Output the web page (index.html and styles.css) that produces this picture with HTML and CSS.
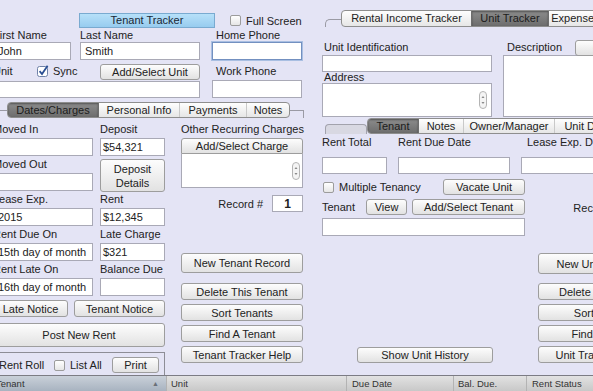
FILE: index.html
```html
<!DOCTYPE html>
<html lang="en">
<head>
    <meta charset="UTF-8">
    <title>Tenant Tracker</title>
    <link rel="stylesheet" href="styles.css">
</head>
<body>
<div class="screen">
    <div class="main">
        <!-- tenant side -->
        <section class="tenant-panel">
            <div class="title-row">
                <div class="title-bar">Tenant Tracker</div>
                <label class="check"><span class="box"></span>Full Screen</label>
            </div>

            <div class="name-grid">
                <div class="lbl">First Name</div>
                <div class="lbl">Last Name</div>
                <div class="lbl phone-lbl">Home Phone</div>
                <div class="field first-field">John</div>
                <div class="field last-field">Smith</div>
                <div class="field phone-field focus"></div>
                <div class="unit-line">
                    <span class="unit-lbl">Unit</span>
                    <label class="check">
                        <svg class="tick" width="12" height="12" viewBox="0 0 12 12"><rect x="0.5" y="1.5" width="10" height="10" rx="2" fill="#fff" stroke="#6f82a8"/><path d="M2.6 6.2 L5 9 L10.6 0.8" fill="none" stroke="#2b4f93" stroke-width="1.8"/></svg>Sync
                    </label>
                </div>
                <div class="unit-btn-cell"><button class="btn unit-btn">Add/Select Unit</button></div>
                <div class="lbl phone-lbl low">Work Phone</div>
                <div class="field unit-field"></div>
                <div class="field phone-field work"></div>
            </div>

            <div class="tab-row">
                <span class="tab-line lead"></span>
                <div class="tabs">
                    <span class="tab on t-dates">Dates/Charges</span>
                    <span class="tab t-personal">Personal Info</span>
                    <span class="tab t-payments">Payments</span>
                    <span class="tab t-notes">Notes</span>
                </div>
                <span class="tab-line tail"></span>
            </div>

            <div class="lower">
                <div class="dates">
                    <div class="field-grid">
                        <div class="cell"><div class="lbl row-lbl">Moved In</div><div class="field"></div></div>
                        <div class="cell"><div class="lbl row-lbl">Deposit</div><div class="field tight">$54,321</div></div>
                        <div class="cell"><div class="lbl row-lbl">Moved Out</div><div class="field"></div></div>
                        <div class="cell"><button class="btn deposit-btn">Deposit<br>Details</button></div>
                        <div class="cell"><div class="lbl row-lbl">Lease Exp.</div><div class="field">2015</div></div>
                        <div class="cell"><div class="lbl row-lbl">Rent</div><div class="field tight">$12,345</div></div>
                        <div class="cell"><div class="lbl row-lbl">Rent Due On</div><div class="field">15th day of month</div></div>
                        <div class="cell"><div class="lbl row-lbl">Late Charge</div><div class="field tight">$321</div></div>
                        <div class="cell"><div class="lbl row-lbl">Rent Late On</div><div class="field">16th day of month</div></div>
                        <div class="cell"><div class="lbl row-lbl">Balance Due</div><div class="field"></div></div>
                    </div>
                    <div class="notice-row">
                        <button class="btn late-btn">Late Notice</button>
                        <button class="btn notice-btn">Tenant Notice</button>
                    </div>
                    <button class="btn post-btn">Post New Rent</button>
                    <div class="roll-box">
                        <span class="roll-lbl">Rent Roll</span>
                        <label class="check list-all"><span class="box"></span>List All</label>
                        <button class="btn print-btn">Print</button>
                    </div>
                </div>

                <div class="actions">
                    <div class="lbl row-lbl">Other Recurring Charges</div>
                    <button class="btn charge-btn">Add/Select Charge</button>
                    <div class="text-box charges">
                        <svg width="8" height="18" viewBox="0 0 8 18"><rect x="0.5" y="0.5" width="7" height="17" rx="3.5" fill="#f4f4f4" stroke="#b4b4b4"/><path d="M2.5 7 L4 5 L5.5 7 Z M2.5 11 L4 13 L5.5 11 Z" fill="#888"/></svg>
                    </div>
                    <div class="record-row">
                        <span>Record #</span>
                        <div class="field rec-field">1</div>
                    </div>
                    <button class="btn big-btn">New Tenant Record</button>
                    <button class="btn side-btn first-side">Delete This Tenant</button>
                    <button class="btn side-btn">Sort Tenants</button>
                    <button class="btn side-btn">Find A Tenant</button>
                    <button class="btn side-btn">Tenant Tracker Help</button>
                </div>
            </div>
        </section>

        <!-- unit side -->
        <section class="unit-panel">
            <div class="top-tabs">
                <span class="corner-line"></span>
                <div class="tabs">
                    <span class="tab t-income">Rental Income Tracker</span>
                    <span class="tab on t-unit">Unit Tracker</span>
                    <span class="tab t-expense">Expense Tracker</span>
                </div>
            </div>

            <div class="unit-upper">
                <div class="unit-id">
                    <div class="lbl id-lbl">Unit Identification</div>
                    <div class="field id-field"></div>
                    <div class="lbl addr-lbl">Address</div>
                    <div class="text-box address">
                        <svg width="8" height="18" viewBox="0 0 8 18"><rect x="0.5" y="0.5" width="7" height="17" rx="3.5" fill="#f4f4f4" stroke="#b4b4b4"/><path d="M2.5 7 L4 5 L5.5 7 Z M2.5 11 L4 13 L5.5 11 Z" fill="#888"/></svg>
                    </div>
                </div>
                <div class="unit-desc">
                    <div class="desc-head">
                        <span class="lbl desc-lbl">Description</span>
                        <button class="btn desc-btn">Clear</button>
                    </div>
                    <div class="text-box desc"></div>
                </div>
            </div>

            <div class="tab-row unit-tabs">
                <span class="stub"></span>
                <div class="tabs">
                    <span class="tab on t-tenant">Tenant</span>
                    <span class="tab t-unotes">Notes</span>
                    <span class="tab t-owner">Owner/Manager</span>
                    <span class="tab t-uunit">Unit Details</span>
                </div>
            </div>

            <div class="rent-row">
                <div class="rent-col total"><div class="lbl rent-lbl">Rent Total</div><div class="field"></div></div>
                <div class="rent-col due"><div class="lbl rent-lbl">Rent Due Date</div><div class="field"></div></div>
                <div class="rent-col lease"><div class="lbl rent-lbl">Lease Exp. Date</div><div class="field"></div></div>
            </div>

            <div class="unit-lower">
                <div class="unit-form">
                    <div class="multi-row">
                        <label class="check"><span class="box"></span>Multiple Tenancy</label>
                        <button class="btn vacate-btn">Vacate Unit</button>
                    </div>
                    <div class="tenant-row">
                        <span>Tenant</span>
                        <button class="btn view-btn">View</button>
                        <button class="btn add-tenant-btn">Add/Select Tenant</button>
                    </div>
                    <div class="field tenant-field"></div>
                    <button class="btn history-btn">Show Unit History</button>
                </div>
                <div class="actions unit-actions">
                    <div class="record-row">
                        <span>Record #</span>
                        <div class="field rec-field">1</div>
                    </div>
                    <button class="btn big-btn">New Unit Record</button>
                    <button class="btn side-btn first-side">Delete This Unit</button>
                    <button class="btn side-btn">Sort Units</button>
                    <button class="btn side-btn">Find A Unit</button>
                    <button class="btn side-btn">Unit Tracker Help</button>
                </div>
            </div>
        </section>
    </div>

    <div class="list-head">
        <div class="col c-tenant">Tenant<span class="sort">&#9650;</span></div>
        <div class="col c-unit">Unit</div>
        <div class="col c-due">Due Date</div>
        <div class="col c-bal">Bal. Due.</div>
        <div class="col c-status">Rent Status</div>
    </div>
</div>
</body>
</html>
```

FILE: styles.css
```css
* {
    box-sizing: border-box;
}
body {
    margin: 0;
    background-color: #e4e4f5;
    font-family: "Liberation Sans", Arial, sans-serif;
    font-size: 11px;
    color: #222;
    overflow: hidden;
}
.screen {
    width: 593px;
    height: 391px;
    overflow: hidden;
    display: flex;
    flex-direction: column;
}
.main {
    display: flex;
    height: 375px;
    flex-shrink: 0;
}

/* shared bits */
.lbl {
    white-space: nowrap;
}
.field {
    background-color: #fff;
    border: 1px solid #a9a9b6;
    height: 18px;
    line-height: 16px;
    padding-left: 4px;
    white-space: nowrap;
    overflow: hidden;
}
.field.tight {
    padding-left: 2px;
}
.focus {
    border-color: #7390c0;
    box-shadow: 0 0 0 1px #a9bfe2;
}
.btn {
    font-family: "Liberation Sans", Arial, sans-serif;
    font-size: 11px;
    color: #222;
    background: linear-gradient(#fdfdfd, #e2e2e2);
    border: 1px solid #9d9d9d;
    border-radius: 3px;
    padding: 0;
    height: 17px;
    line-height: 14px;
    white-space: nowrap;
}
.check {
    display: flex;
    align-items: center;
    white-space: nowrap;
}
.box {
    width: 11px;
    height: 11px;
    border: 1px solid #9c9c9c;
    border-radius: 2px;
    background: linear-gradient(#fff, #e6e6e6);
    margin-right: 5px;
    flex-shrink: 0;
}
.tick {
    margin-right: 4px;
}
.text-box {
    background-color: #fff;
    border: 1px solid #a9a9b6;
    display: flex;
    justify-content: flex-end;
    align-items: center;
    padding-right: 2px;
}

/* tabs */
.tab-row {
    display: flex;
    height: 16px;
}
.tabs {
    display: flex;
    height: 16px;
    border: 1px solid #8e8e8e;
    border-radius: 4px;
    overflow: hidden;
    background: linear-gradient(#fefefe, #e6e6e6);
    flex-shrink: 0;
}
.tab {
    text-align: center;
    line-height: 14px;
    border-left: 1px solid #c9c9c9;
    white-space: nowrap;
    flex-shrink: 0;
}
.tab:first-child {
    border-left: none;
}
.tab.on {
    background: linear-gradient(#8c8c8c, #6d6d6d);
    color: #1c1c1c;
    box-shadow: inset 0 1px 2px rgba(0, 0, 0, 0.4);
    border-left-color: #6d6d6d;
}
.tab.on + .tab {
    border-left-color: #6d6d6d;
}
.tab-line {
    align-self: flex-end;
    height: 8px;
    border-top: 1px solid #9a9aa4;
}
.tab-line.lead {
    width: 14px;
}
.tab-line.tail {
    width: 14px;
    border-right: 1px solid #9a9aa4;
}
.t-dates { width: 90px; }
.t-personal { width: 81px; }
.t-payments { width: 67px; }
.t-notes { width: 43px; }

/* tenant panel */
.tenant-panel {
    margin-left: -7px;
    width: 325px;
    flex-shrink: 0;
}
.title-row {
    display: flex;
    align-items: center;
    margin-top: 13px;
    height: 15px;
}
.title-bar {
    margin-left: 86px;
    width: 136px;
    height: 15px;
    background: linear-gradient(#b7e0f9, #97ccef);
    border: 1px solid #79aad0;
    text-align: center;
    line-height: 13px;
    color: #1b2836;
}
.title-row .check {
    margin-left: 15px;
}
.name-grid {
    display: grid;
    grid-template-columns: 87px 132px 90px;
    grid-template-rows: 14px 18px 20px 19px;
    line-height: 14px;
}
.first-field { width: 78px; }
.last-field { width: 120px; }
.phone-field { width: 90px; }
.phone-lbl {
    padding-left: 4px;
}
.low {
    align-self: end;
    margin-bottom: 2px;
}
.unit-line {
    display: flex;
    align-items: flex-end;
    padding-bottom: 2px;
}
.unit-lbl {
    width: 44px;
}
.unit-btn-cell {
    align-self: end;
}
.unit-btn {
    margin-left: 20px;
    width: 100px;
    height: 16px;
}
.unit-field {
    grid-column: 1 / 3;
    width: 207px;
    height: 17px;
    margin-top: 1px;
}
.work {
    height: 18px;
}
.tenant-panel .tab-row {
    margin-top: 3px;
}

.lower {
    display: flex;
    padding-top: 3px;
}
.dates {
    width: 172px;
    display: flex;
    flex-direction: column;
}
.field-grid {
    display: grid;
    grid-template-columns: 100px 65px;
    grid-auto-rows: 35px;
    column-gap: 7px;
}
.row-lbl {
    line-height: 17px;
}
.deposit-btn {
    margin-top: 3px;
    width: 65px;
    height: 33px;
    line-height: 14px;
}
.notice-row {
    display: flex;
    justify-content: space-between;
    margin-top: 4px;
}
.late-btn { width: 75px; }
.notice-btn { width: 91px; }
.post-btn {
    margin-top: 6px;
    height: 24px;
    width: 172px;
}
.roll-box {
    margin-top: 5px;
    height: 23px;
    border-top: 1px solid #8d8d96;
    border-right: 1px solid #8d8d96;
    display: flex;
    align-items: center;
    padding-top: 2px;
}
.roll-lbl {
    margin-left: 6px;
    width: 55px;
}
.print-btn {
    margin-left: auto;
    margin-right: 5px;
    width: 47px;
    height: 16px;
}

.actions {
    margin-left: 16px;
    width: 122px;
    display: flex;
    flex-direction: column;
}
.charge-btn {
    height: 16px;
    border-radius: 3px 3px 0 0;
}
.charges {
    height: 34px;
    border-top: none;
}
.record-row {
    display: flex;
    justify-content: flex-end;
    align-items: center;
    margin-top: 7px;
    height: 17px;
}
.rec-field {
    margin-left: 9px;
    width: 31px;
    height: 17px;
    padding-left: 0;
    text-align: center;
    font-size: 12px;
    font-weight: bold;
}
.big-btn {
    margin-top: 41px;
    height: 20px;
}
.side-btn {
    margin-top: 4px;
}
.side-btn.first-side {
    margin-top: 10px;
}

/* unit panel */
.unit-panel {
    width: 340px;
    flex-shrink: 0;
    padding-left: 4px;
}
.top-tabs {
    display: flex;
    margin-top: 10px;
    height: 17px;
}
.top-tabs .tabs {
    height: 17px;
}
.top-tabs .tab {
    line-height: 15px;
}
.corner-line {
    align-self: flex-end;
    margin-left: 3px;
    width: 16px;
    height: 8px;
    border-top: 1px solid #9a9aa4;
    border-left: 1px solid #9a9aa4;
    border-top-left-radius: 5px;
}
.t-income { width: 129px; }
.t-unit { width: 77px; }
.t-expense { width: 88px; }

.unit-upper {
    display: flex;
    margin-top: 12px;
}
.unit-id {
    width: 170px;
}
.id-lbl {
    line-height: 16px;
    padding-left: 2px;
}
.id-field {
    height: 17px;
}
.addr-lbl {
    line-height: 11px;
    padding-left: 2px;
}
.address {
    height: 34px;
    padding-right: 4px;
}
.unit-desc {
    margin-left: 11px;
    width: 120px;
}
.desc-head {
    display: flex;
    height: 16px;
    align-items: center;
}
.desc-lbl {
    padding-left: 4px;
}
.desc-btn {
    margin-left: 13px;
    margin-top: 2px;
    width: 62px;
    height: 16px;
    flex-shrink: 0;
}
.desc {
    height: 62px;
}
.unit-tabs {
    margin-top: 1px;
}
.stub {
    align-self: flex-end;
    margin-left: 3px;
    width: 42px;
    height: 10px;
    border: 1px solid #a2a2ac;
    border-bottom: none;
    border-radius: 4px 4px 0 0;
    background-color: #d8d8e2;
}
.t-tenant { width: 50px; }
.t-unotes { width: 45px; }
.t-owner { width: 91px; }
.t-uunit { width: 76px; }

.rent-row {
    display: flex;
    gap: 11px;
}
.rent-lbl {
    line-height: 16px;
    margin-bottom: 7px;
}
.rent-col .field {
    height: 17px;
}
.total { width: 65px; }
.due { width: 112px; }
.lease { width: 95px; }
.lease .rent-lbl {
    padding-left: 6px;
}

.unit-lower {
    display: flex;
}
.unit-form {
    width: 205px;
    display: flex;
    flex-direction: column;
}
.multi-row {
    display: flex;
    align-items: center;
    margin-top: 5px;
    height: 16px;
    padding-left: 1px;
}
.vacate-btn {
    margin-left: auto;
    width: 82px;
    height: 16px;
}
.tenant-row {
    display: flex;
    align-items: center;
    margin-top: 4px;
    height: 16px;
}
.view-btn {
    margin-left: 11px;
    width: 41px;
    height: 16px;
}
.add-tenant-btn {
    margin-left: 5px;
    width: 113px;
    height: 16px;
}
.tenant-field {
    margin-top: 3px;
    height: 18px;
}
.history-btn {
    margin-top: 111px;
    margin-left: 35px;
    width: 136px;
    height: 16px;
}
.unit-actions {
    margin-left: 13px;
}
.unit-actions .record-row {
    margin-top: 25px;
}
.unit-actions .big-btn {
    margin-top: 37px;
    height: 21px;
}
.unit-actions .first-side {
    margin-top: 9px;
}

/* list header */
.list-head {
    display: flex;
    height: 16px;
    margin-left: -5px;
    border-top: 1px solid #7c7c84;
    background: linear-gradient(#e2e2e2, #c8c8c8);
    font-size: 9.5px;
    color: #333;
}
.col {
    flex-shrink: 0;
    line-height: 15px;
    padding-left: 4px;
    border-right: 1px solid #b3b3b3;
    white-space: nowrap;
}
.c-tenant {
    width: 172px;
    padding-left: 1px;
    display: flex;
    background: linear-gradient(#c9d0d9, #a8b3c0);
}
.sort {
    margin-left: auto;
    margin-right: 7px;
    font-size: 7px;
    color: #6a6f78;
}
.c-unit { width: 180px; }
.c-due { width: 107px; padding-left: 5px; }
.c-bal { width: 73px; }
.c-status { width: 80px; padding-left: 5px; }
```
